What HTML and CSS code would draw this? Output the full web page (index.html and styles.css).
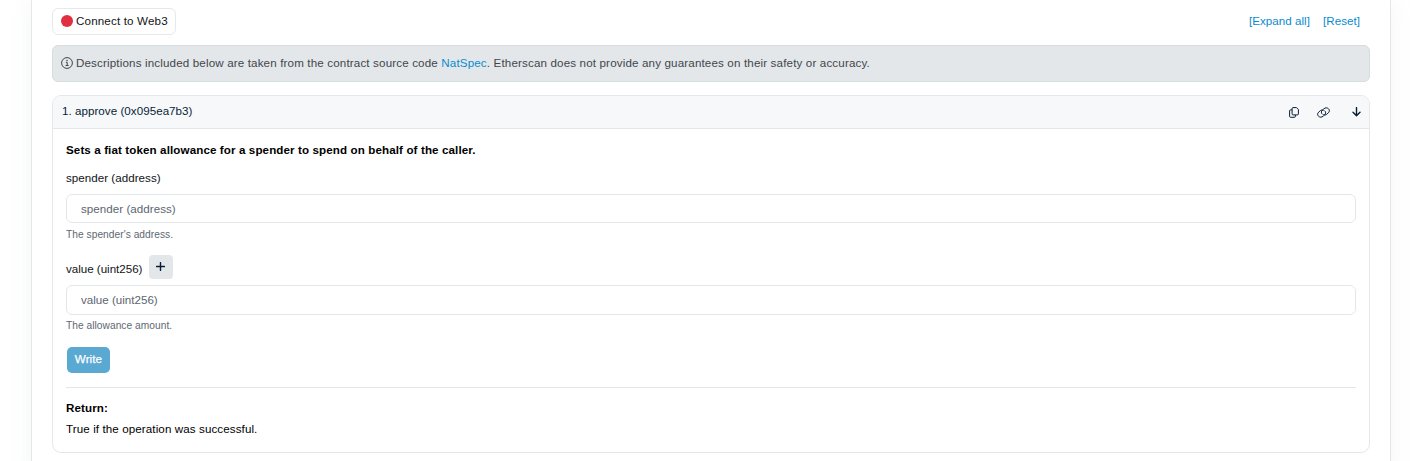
FILE: index.html
```html
<!DOCTYPE html>
<html lang="en">
<head>
<meta charset="utf-8">
<title>Write Contract</title>
<link rel="stylesheet" href="styles.css">
</head>
<body>
<main class="panel">
  <div class="toolbar">
    <button class="connect" type="button"><span class="dot"></span><span class="connect-text">Connect to Web3</span></button>
    <nav class="actions"><a class="link expand">[Expand all]</a><a class="link reset">[Reset]</a></nav>
  </div>
  <div class="notice">
    <svg class="info" viewBox="0 0 12 12" fill="none" stroke="currentColor"><circle cx="6" cy="6" r="5.4"/><path d="M4.9 5.3H6.2V8.4M4.6 8.5H7.6"/><circle cx="6" cy="3.5" r=".75" fill="currentColor" stroke="none"/></svg>
    <p class="notice-text">Descriptions included below are taken from the contract source code <a class="link">NatSpec</a>. Etherscan does not provide any guarantees on their safety or accuracy.</p>
  </div>
  <section class="card">
    <header class="card-header">
      <span class="title">1. approve (0x095ea7b3)</span>
      <div class="icons">
        <svg class="icon-copy" viewBox="0 0 10 11" fill="none" stroke="currentColor"><path d="M4 .6H7.5L9.4 2.5V6.9Q9.4 7.9 8.4 7.9H4.1Q3.1 7.9 3.1 6.9V1.6Q3.1 .6 4.1 .6Z"/><path d="M3 2.9H1.6Q.6 2.9 .6 3.9V9.3Q.6 10.3 1.6 10.3H5.4Q6.4 10.3 6.4 9.3V8"/></svg>
        <svg class="icon-link" viewBox="0 0 13 11" fill="none" stroke="currentColor" stroke-linecap="round"><path d="M5.1 7.1C3.9 5.9 4.2 4.2 5.3 3.2L6.8 1.9C8.3.5 10.1.5 11.4 1.7C12.8 3 12.6 4.6 11.4 5.8L9.7 7.3C8.8 8.1 7.6 8.3 6.7 7.7"/><path d="M7.9 3.9C9.1 5.1 8.8 6.8 7.7 7.8L6.2 9.1C4.7 10.5 2.9 10.5 1.6 9.3C.2 8 .4 6.4 1.6 5.2L3.3 3.7C4.2 2.9 5.4 2.7 6.3 3.3"/></svg>
        <svg class="icon-down" viewBox="0 0 9 10" fill="none" stroke="currentColor" stroke-linecap="round" stroke-linejoin="round"><path d="M4.5.6V8.6M1 5.2L4.5 8.7L8 5.2"/></svg>
      </div>
    </header>
    <div class="card-body">
      <p class="strong summary">Sets a fiat token allowance for a spender to spend on behalf of the caller.</p>
      <label class="label spender" for="spender">spender (address)</label>
      <input class="field" id="spender" placeholder="spender (address)">
      <p class="help"><span class="help-spender">The spender's address.</span></p>
      <div class="value-row">
        <label class="label value" for="value">value (uint256)</label>
        <button class="plus" type="button" aria-label="Add zeroes"><svg class="icon-plus" viewBox="0 0 9 9" fill="none" stroke="currentColor" stroke-linecap="round"><path d="M4.5.6V8.4M.6 4.5H8.4"/></svg></button>
      </div>
      <input class="field field-value" id="value" placeholder="value (uint256)">
      <p class="help help-value"><span class="help-amount">The allowance amount.</span></p>
      <button class="write" type="button">Write</button>
      <hr class="rule">
      <p class="strong">Return:</p>
      <p class="result">True if the operation was successful.</p>
    </div>
  </section>
</main>
</body>
</html>
```
FILE: styles.css
```css
* { box-sizing: border-box; }
body {
  margin: 0;
  height: 461px;
  overflow: hidden;
  background: #fff;
  color: #111417;
  font: 11.6px/18px "Liberation Sans", Arial, sans-serif;
}
p { margin: 0; }
button, input { font: inherit; margin: 0; }
svg { display: block; flex: none; }
.panel {
  height: 480px;
  margin: 0 26px 0 31px;
  padding: 8px 20px 0;
  border: 1px solid #e3e7ea;
  border-width: 0 1px;
  box-shadow: 0 0 20px #bdc5d12b;
}
.toolbar { display: flex; justify-content: space-between; height: 27px; }
.connect {
  display: flex;
  align-items: center;
  gap: 3px;
  width: 124px;
  padding: 0 0 1px 8px;
  border: 1px solid #e6e8ea;
  border-radius: 6px;
  background: #fff;
  color: #111417;
  white-space: nowrap;
  letter-spacing: .16px;
}
.dot { width: 12px; height: 12px; border-radius: 50%; background: #e03040; }
.actions { display: flex; gap: 13px; padding: 4px 10px 0 0; letter-spacing: .04px; }
.link { color: #088bd0; }
.notice {
  display: flex;
  align-items: center;
  gap: 3px;
  height: 37px;
  margin-top: 10px;
  padding: 0 8px 1px;
  border: 1px solid #d7dcdf;
  border-radius: 6px;
  background: #e3e7ea;
  color: #41464b;
  letter-spacing: .15px;
}
.info { width: 12px; height: 12px; }
.card { height: 358px; margin-top: 13px; border: 1px solid #e5e7e9; border-radius: 9px; overflow: hidden; }
.card-header {
  display: flex;
  justify-content: space-between;
  height: 33px;
  padding: 6px 8px 0 9px;
  border-bottom: 1px solid #e3e7ea;
  background: #f7f8fa;
  color: #081d35;
}
.title { letter-spacing: .04px; }
.icons { display: flex; align-items: center; height: 20px; }
.icon-copy { width: 10px; height: 11px; margin-right: 18px; }
.icon-link { width: 13px; height: 11px; margin-right: 22px; }
.icon-down { width: 9px; height: 10px; stroke-width: 1.4; }
.card-body { padding: 12px 13px 0; }
.strong { color: #000; font-weight: 700; letter-spacing: .11px; }
.label { display: block; letter-spacing: .03px; }
.spender { margin: 10px 0 7px; }
.field {
  display: block;
  width: 100%;
  height: 29px;
  padding: 0 14px;
  border: 1px solid #e3e7ea;
  border-radius: 6px;
  background: #fff;
  letter-spacing: .04px;
}
.field::placeholder { color: #5b6670; opacity: 1; }
.field-value { height: 30px; padding-bottom: 1px; letter-spacing: 0; }
.help { height: 22px; padding-top: 3px; color: #5e6871; font-size: 10.2px; letter-spacing: .04px; }
.help-value { padding-top: 2px; }
.value-row { display: flex; gap: 7px; height: 30px; margin: 10px 0 0; }
.value { width: 76px; padding-top: 5px; white-space: nowrap; letter-spacing: -.02px; }
.plus {
  display: flex;
  align-items: center;
  justify-content: center;
  width: 24px;
  height: 24px;
  padding: 0 1px 1px 0;
  border: 0;
  border-radius: 4px;
  background: #e3e7ea;
  color: #081d35;
}
.icon-plus { width: 9px; height: 9px; stroke-width: 1.4; }
.write {
  display: block;
  width: 43px;
  height: 26px;
  margin: 10px 0 0 1px;
  padding: 0 0 2px;
  border: 0;
  border-radius: 5px;
  background: #5aa9d3;
  color: #fff;
  letter-spacing: .1px;
  -webkit-text-stroke: .25px;
}
.rule { height: 1px; margin: 14px 0 11px; border: 0; background: #e3e5e7; }
.result { margin-top: 3px; color: #000; letter-spacing: .1px; }
```
